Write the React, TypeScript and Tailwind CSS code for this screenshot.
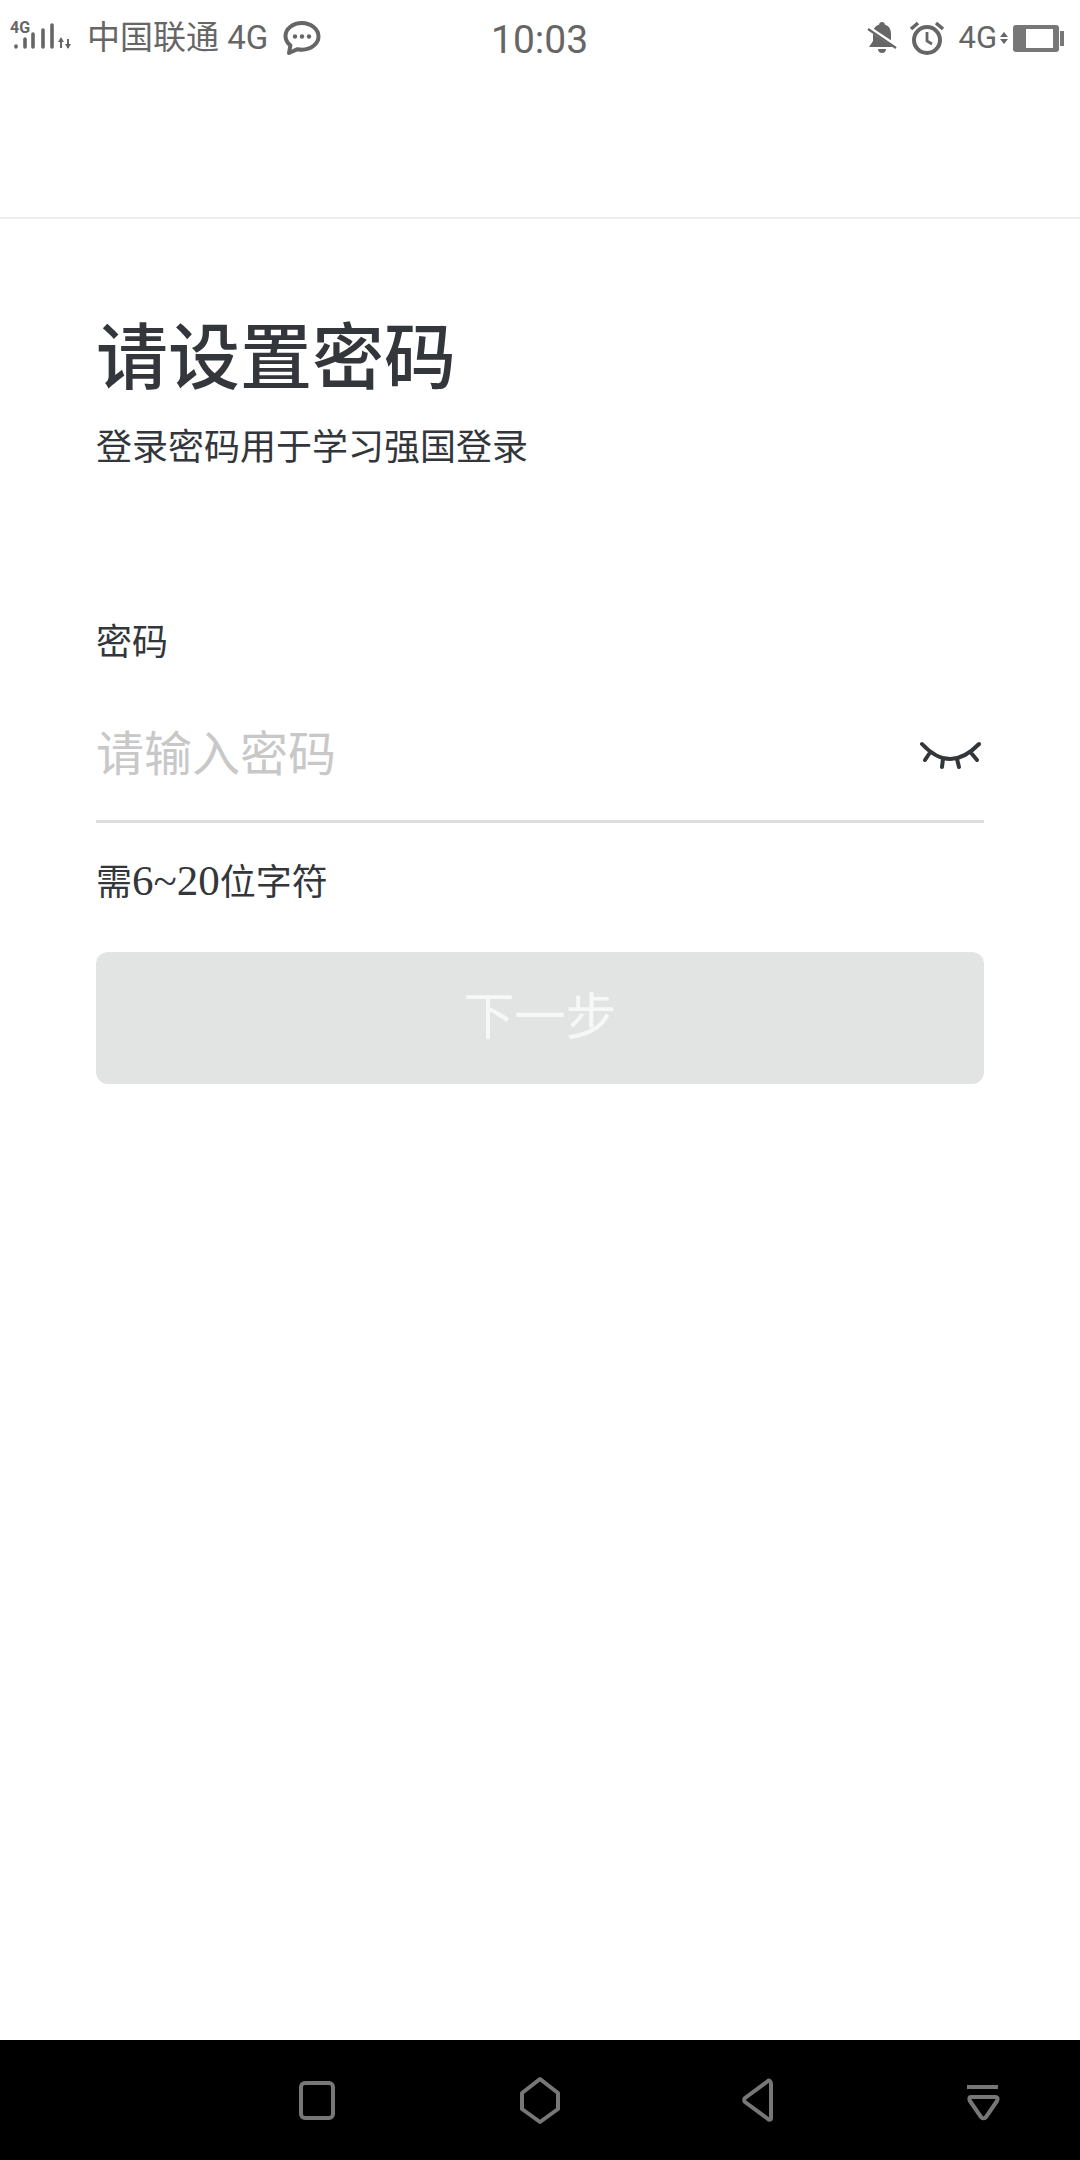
import React from 'react';

const serif = 'font-["Liberation_Serif","Noto_Sans_CJK_SC",serif]';

const SignalIcon = () => (
  <svg width="62" height="40" viewBox="0 -2 62 40" className="text-[#666]">
    <text x="0" y="13" fontSize="16" fontWeight="700" fontFamily="Roboto, sans-serif" fill="currentColor">4G</text>
    <g stroke="currentColor" strokeLinecap="round">
      <path d="M6 27v-1M15 27v-8M23 27v-13M33 27v-17" strokeWidth="3.600" />
      <path d="M42 27v-22" strokeWidth="3.600" />
      <path d="M51 28v-9M58 28v-9" strokeWidth="2" strokeLinecap="butt" />
    </g>
    <path d="M51 17l-3 5h6zM58 29l-3-5h6z" fill="currentColor" />
  </svg>
);

const ChatIcon = () => (
  <svg width="38" height="34" viewBox="0 0 38 34">
    <path d="M19 2C10 2 2.500 7.700 2.500 15c0 3.800 1.900 7 4.900 9.300L6 32l8.500-3.800c1.500.3 3 .5 4.500.5 9 0 16.500-6 16.500-13.200S28 2 19 2z" fill="none" stroke="#666" strokeWidth="4" strokeLinejoin="round" />
    <circle cx="12" cy="15.500" r="2.200" fill="#666" />
    <circle cx="19" cy="15.500" r="2.200" fill="#666" />
    <circle cx="26" cy="15.500" r="2.200" fill="#666" />
  </svg>
);

const MutedBell = () => (
  <svg width="30" height="34" viewBox="0 0 30 34">
    <path d="M15 1c-1.700 0-2.800 1.100-2.800 2.600C7.500 5 6 9 6 13v7l-4 6h26l-4-6v-7c0-4-1.500-8-6.200-9.400C17.800 2.100 16.700 1 15 1z" fill="#666" />
    <path d="M11 28h8c0 2.500-1.800 4-4 4s-4-1.500-4-4z" fill="#666" />
    <path d="M0 6l30 20" stroke="#fff" strokeWidth="4.500" />
    <path d="M1 8l28 19" stroke="#666" strokeWidth="2.200" />
  </svg>
);

const AlarmIcon = () => (
  <svg width="36" height="34" viewBox="0 0 36 34">
    <circle cx="18" cy="19" r="13" fill="none" stroke="#666" strokeWidth="4" />
    <path d="M18 11v9l5 3" fill="none" stroke="#666" strokeWidth="2.800" />
    <path d="M2 8l7-6M34 8l-7-6" stroke="#666" strokeWidth="3.600" />
  </svg>
);

const Eye = () => (
  <svg width="62" height="34" viewBox="0 0 62 34">
    <g fill="none" stroke="#33363a" strokeWidth="4" strokeLinecap="round">
      <path d="M3 5Q31 35 60 5" />
      <path d="M10 15l-4 6M24 20l-1 8M38 20l2 8M53 15l5 6" />
    </g>
  </svg>
);

export default function App() {
  return (
    <div className="flex h-[2160px] w-[1080px] flex-col bg-white">
      {/* status bar */}
      <div className='relative h-[219px] border-b-2 border-[#eeeeee] font-["Roboto","Noto_Sans_CJK_SC",sans-serif] text-[#666]'>
        <div className="flex items-center justify-between pt-[18px] pl-[10px] pr-[16px]">
          <div className="flex items-center">
            <SignalIcon />
            <span className="ml-[15px] text-[33px] leading-[36px]">中国联通 4G</span>
            <span className="ml-[15px] flex"><ChatIcon /></span>
          </div>
          <div className="flex items-center">
            <MutedBell />
            <span className="ml-[12px] flex"><AlarmIcon /></span>
            <span className="ml-[13px] text-[31px] leading-[36px]">4G</span>
            <span className="ml-[3px] flex flex-col gap-[2px]">
              <span className="h-0 w-0 border-x-[4px] border-b-[5px] border-x-transparent border-b-[#666]" />
              <span className="h-0 w-0 border-x-[4px] border-t-[5px] border-x-transparent border-t-[#666]" />
            </span>
            <div className="ml-[5px] flex items-center gap-[1px]">
              <div className="flex h-[27px] w-[46px] justify-end rounded-[3px] bg-[#777] py-[4px] pr-[6px]">
                <div className="h-full w-[27px] bg-white" />
              </div>
              <div className="h-[15px] w-[4px] bg-[#777]" />
            </div>
          </div>
        </div>
        <span className="absolute left-[491px] top-[18px] text-[39px] leading-[44px]">10:03</span>
      </div>

      {/* form */}
      <div className={`flex-1 px-[96px] pt-[98px] text-[#33363a] ${serif}`}>
        <h1 className="text-[72px] leading-[84px] font-medium">请设置密码</h1>
        <p className="mt-[22px] text-[36px] leading-[50px]">登录密码用于学习强国登录</p>

        <label className="mt-[145px] block text-[36px] leading-[50px]">密码</label>
        <div className="mt-[19px] flex h-[136px] items-center justify-between border-b-[3px] border-[#dddddd]">
          <span className="mt-[2px] text-[48px] leading-[60px] text-[#c8c8c8]">请输入密码</span>
          <span className="mr-[3px] mt-[4px] flex"><Eye /></span>
        </div>
        <p className="mt-[33px] text-[36px] leading-[50px]">
          需<span className="text-[43px]">6~20</span>位字符
        </p>

        <button className="mt-[44px] flex h-[132px] w-full items-center justify-center rounded-[12px] bg-[#e2e4e4] text-[51px] text-[#f6f7f7]">
          下一步
        </button>
      </div>

      {/* nav bar */}
      <div className="relative h-[120px] bg-black">
        <svg width="780" height="120" viewBox="0 0 780 120" className="absolute left-[270px] top-0">
          <g fill="none" stroke="#777" strokeWidth="4" strokeLinejoin="round">
            <rect x="31" y="43" width="32" height="35" rx="4" />
            <path d="M270 39l18 14v16l-18 13-18-13v-16z" />
            <path d="M502 44v34c0 2-2 2-3 1l-23-17c-1-1-1-3 0-4l23-17c1-1 3 0 3 3z" transform="translate(-1 0)" />
            <path d="M702 57h24c3 0 3 2 2 4l-11 16c-2 2-3 2-5 0l-11-16c-1-2-1-4 1-4z" transform="translate(-1 0)" />
          </g>
          <path d="M697 47h31" stroke="#777" strokeWidth="4" />
        </svg>
      </div>
    </div>
  );
}
